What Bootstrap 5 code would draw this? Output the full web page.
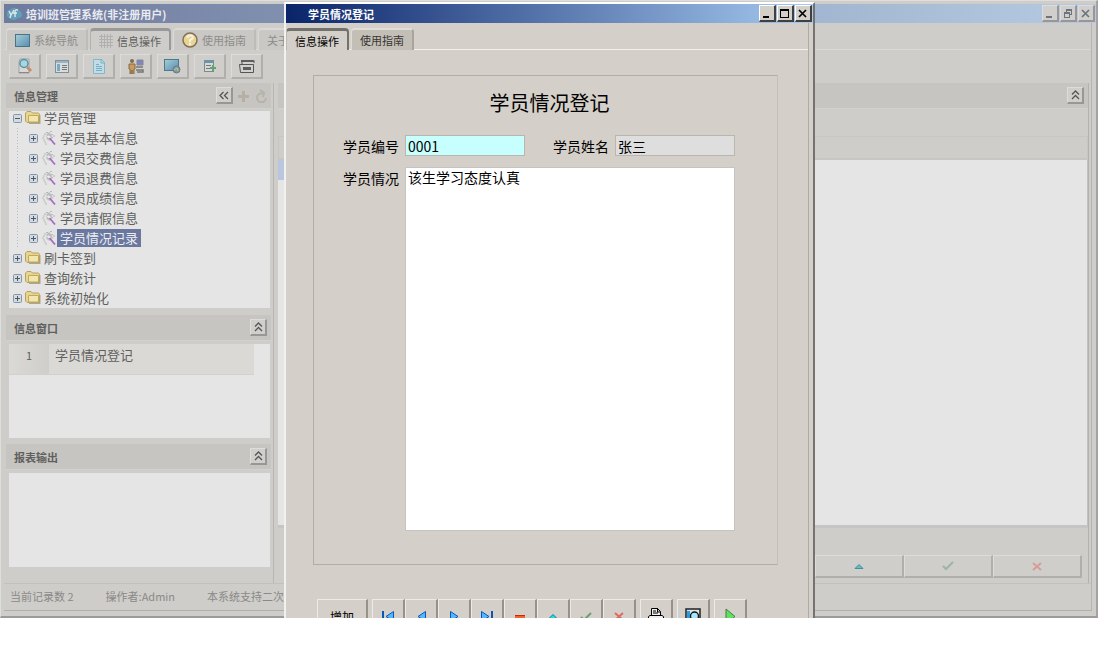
<!DOCTYPE html>
<html lang="zh-CN">
<head>
<meta charset="utf-8">
<meta name="viewport" content="width=device-width, initial-scale=1">
<title>培训班管理系统</title>
<link href="https://cdn.jsdelivr.net/npm/bootstrap@5.3.0/dist/css/bootstrap.min.css" rel="stylesheet">
<style>
body{font-family:"Noto Sans CJK SC","Liberation Sans",sans-serif;font-size:11px;line-height:16px;color:#5f5f5e;background:#fff}
button{font:inherit;color:inherit;padding:0}
svg{display:block;flex:none}
ul{list-style:none;margin:0;padding:0}
.desk{overflow:hidden}
/* main window */
.main-win{background:#cecdc9;border:1px solid #dededc;border-right:2px solid #a2a2a0;border-bottom:2px solid #9b9b9a;padding:3px 0 5px 3px}
.bar{height:19px;padding-right:1px;font-weight:700}
.main-bar{background:linear-gradient(90deg,#6f7b9e,#b5cae2);color:#e9ebf0;padding-left:2px}
.wins{gap:1px}
.frame{border-right:1px solid #b5b4b0;border-bottom:1px solid #b0afab;margin-right:4px}
.tabs{height:27px;padding-top:5px;border-bottom:1px solid #dbdad7;gap:2px}
.main-tabs{padding-left:2px}
.tab-b{height:22px;border:1px solid #dad9d6;border-top-width:2px;border-bottom:0;border-right:2px solid #bdbcb8;border-radius:4px 4px 0 0;background:#c9c8c4;color:#8e8d8b;padding:0 8px;gap:4px;white-space:nowrap}
.tab-b.on{background:#cecdc9;color:#5f5f5e;border-color:#999997;border-left-color:#b2b2b0;border-top-width:3px}
.raised{background:#cfceca;border:1px solid #dddcda;border-right:2px solid #b0afac;border-bottom:2px solid #b0afac}
.tool-b{width:32px;height:25px}
.tools{height:33px;gap:5px;padding-left:5px}
.head{background:#c6c5c1;height:26px;font-weight:700;padding:0 4px 0 8px;border-bottom:1px solid #d2d1cd}
.sq{width:17px;height:17px;background:#d0cfcb;border:1px solid #dedddb;border-right:2px solid #989795;border-bottom:2px solid #989795}
.side{width:270px;border-right:1px solid #b7b6b3;padding:0 2px 16px}
.pane{background:#e5e5e5;margin:3px 1px 0 3px}
.tree-box{height:197px;margin-top:2px;margin-bottom:7px;font-size:13px}
.list-box{height:94px;margin-bottom:6px}
.report-box{height:94px}
.node{height:20px}
.ind{width:16px;height:20px;background:repeating-linear-gradient(#bbb 0 1px,transparent 1px 3px) 8px 0/1px 100% no-repeat}
.lab{padding:0 3px;line-height:18px}
.lab.sel{background:#6a789f;color:#eceef3}
.grid-row{width:245px;height:31px;background:#dad9d5;border-bottom:1px solid #d1d0cc}
.num{width:40px;background:linear-gradient(90deg,#dad9d5,#cfceca);text-align:center;padding-top:3px}
.row-text{font-size:13px;padding:3px 0 0 6px}
.status{height:27px;border-top:1px solid #c2c1bd;color:#8a8988;gap:32px;padding-left:6px;padding-bottom:3px}
.work{border-right:1px solid #b3b2af;margin-left:4px;margin-right:2px}
.cap{height:27px}
.colhead{height:24px;border:1px solid #c7c6c2;border-width:1px 1px 2px}
.data{background:#e5e5e5;min-height:100px;border-right:1px solid #c2c1bd;border-bottom:3px solid #c5c5c4}
.sel-row{height:20px;background:#b9c6dd}
.navs{padding:0 6px 5px 0}
.nav-b{width:89px;height:23px}
.c-ok{color:#9bb5a3}
.c-no{color:#d79c96}
/* dialog window */
.dlg{top:2px;left:284px;right:283px;bottom:0;background:#d4cfc8;color:#000;border:2px solid #fff;border-left-color:#f1f1f0;border-right:2px solid #747371;border-bottom:0}
.dlg-bar{background:linear-gradient(90deg,#0a246a,#a6caf0);color:#fff;padding-left:22px}
.dlg .sq{background:#d4cfc8;border-color:#fff #404040 #404040 #fff}
.dlg-frame{border-right:1px solid #aeaaa4;margin-right:4px}
.dlg .tabs{border-color:#f3f1ee}
.dlg .tab-b{background:#c4bfb6;color:#373634;border-color:#e0ddd7 #a9a59e #e0ddd7 #e0ddd7;padding:0 8px}
.dlg .tab-b.on{background:#d4cfc8;color:#000;border-color:#73716e #73716e #73716e #bdb9b3}
.dlg .c-ok{color:#6c9d77}
.dlg .c-no{color:#dc6a5d}
.group{margin:25px 30px 34px 27px;height:490px;border:1px solid #b1ada7;border-right-color:#c4c0ba;padding:15px 21px 0 29px}
.group h1{font-size:20px;line-height:24px;font-weight:400;margin:0 0 20px;text-align:center}
.fields{display:grid;grid-template-columns:62px 1fr 28px 62px 1fr;row-gap:9px;font-size:14px;padding-right:21px}
.fields label{line-height:23px}
.fld{border:1px solid #b9b6b0;border-radius:0;width:100%;height:21px;padding:0 2px;line-height:19px;color:#000;font-size:14px;outline:0;min-width:0}
.fld.key{background:#c7ffff}
.fld.ro{background:#dededf}
textarea.fld{height:364px;resize:none;grid-column:2/6;background:#fff;border-color:#c7c4bf;display:block}
.cmds{padding-left:31px;height:37px;gap:4px;font-size:12px}
.cmd{width:33px;height:36px;background:#d4cfc8;border:1px solid #edebe7;border-right:2px solid #969289;border-bottom:2px solid #969289}
.cmd.wide{width:51px}
</style>
</head>
<body>
<svg width="0" height="0" class="position-absolute" aria-hidden="true">
<defs>
<symbol id="up2" viewBox="0 0 9 10"><path d="M1 4.500 4.500 1 8 4.500M1 9 4.500 5.500 8 9" fill="none" stroke="#555" stroke-width="1.300"/></symbol>
<symbol id="left2" viewBox="0 0 10 9"><path d="M4.500 1 1 4.500 4.500 8M9 1 5.500 4.500 9 8" fill="none" stroke="#555" stroke-width="1.300"/></symbol>
<symbol id="folder" viewBox="0 0 16 14"><path d="M4 4h11.500v9H4z" fill="#a8a59b"/><path d="M.5 2 2 .5h4L7.500 2h6l1 1.500v8H2L.5 10z" fill="#e6d68f" stroke="#b8a15e"/><path d="M3.500 4.500h10v6.500h-10z" fill="#efe7ae" stroke="#c3a85c"/></symbol>
<symbol id="plus" viewBox="0 0 9 9"><rect x=".5" y=".5" width="8" height="8" rx="1" fill="#d4dae0" stroke="#8496a9"/><path d="M2 4.500h5M4.500 2v5" stroke="#4b5867"/></symbol>
<symbol id="minus" viewBox="0 0 9 9"><rect x=".5" y=".5" width="8" height="8" rx="1" fill="#d4dae0" stroke="#8496a9"/><path d="M2 4.500h5" stroke="#4b5867"/></symbol>
<symbol id="wand" viewBox="0 0 15 15"><path d="M5 3 8 1 9 3 12 3 10 5 12 7 9 8 8 10 5 8 5 5z" fill="#bcbdbd"/><path d="M3 3h1M2 5h1M1 7h1M2 9h1M3 11h1M4 13h1M9 .5h1M5 1.500h1M12 5h1" stroke="#8d8d8d"/><path d="M6 5l3 2" stroke="#eee" stroke-width="2"/><path d="m8 7 5.500 6.500" stroke="#a66bc4" stroke-width="1.800"/></symbol>
<symbol id="min" viewBox="0 0 12 12"><path d="M3 9h6v2H3z" fill="currentColor"/></symbol>
<symbol id="max" viewBox="0 0 12 12"><path d="M2 2h9v9H2zM3 4v6h7V4z" fill="currentColor" fill-rule="evenodd"/></symbol>
<symbol id="restore" viewBox="0 0 12 12"><path d="M5 2h6v6H9V7h1V4H6v1H5zM3 5h6v6H3zM4 7v3h4V7z" fill="currentColor" fill-rule="evenodd"/></symbol>
<symbol id="close" viewBox="0 0 12 12"><path d="m3 3 7 7M10 3l-7 7" stroke="currentColor" stroke-width="1.700"/></symbol>
<symbol id="tri" viewBox="0 0 10 5"><path d="M5 .5 9 4.500H1z" fill="#64bdc9" stroke="#448f9a"/></symbol>
<symbol id="tick" viewBox="0 0 12 10"><path d="m1 5 3 3 7-7" fill="none" stroke="currentColor" stroke-width="2"/></symbol>
<symbol id="cross" viewBox="0 0 10 9"><path d="m1 1 8 7M9 1 1 8" stroke="currentColor" stroke-width="1.900"/></symbol>
<linearGradient id="scr" x2="1" y2="1"><stop stop-color="#a8ced8"/><stop offset="1" stop-color="#568eae"/></linearGradient>
</defs>
</svg>

<div class="desk position-relative">
<div class="main-win">
  <header class="bar main-bar d-flex align-items-center">
    <svg width="16" height="15" viewBox="0 0 16 15" class="me-1"><path d="M3 12Q0 11 1 7q0-3 4-4 4-3 7 1 4 1 4 5 0 3-4 3-4 4-9 0z" fill="#5f9fb7"/><path d="m3 5 2 4 3-5M5 9l-1 3M12 4q-3-1-3 2v5M7 7h4" fill="none" stroke="#e0e8ea" stroke-width="1.400"/></svg>
    <span>培训班管理系统(非注册用户)</span>
    <div class="wins d-flex ms-auto text-secondary">
      <button class="sq" aria-label="最小化"><svg width="12" height="12"><use href="#min"/></svg></button>
      <button class="sq" aria-label="还原"><svg width="12" height="12"><use href="#restore"/></svg></button>
      <button class="sq" aria-label="关闭"><svg width="12" height="12"><use href="#close"/></svg></button>
    </div>
  </header>
  <div class="frame">
    <nav class="tabs main-tabs d-flex">
      <button class="tab-b d-flex align-items-center"><svg width="15" height="13"><rect x=".5" y=".5" width="14" height="12" fill="url(#scr)" stroke="#477488"/></svg>系统导航</button>
      <button class="tab-b on d-flex align-items-center"><svg width="14" height="14"><path d="M2.500 0v14M5.500 0v14M8.500 0v14M11.500 0v14M0 2.500h14M0 5.500h14M0 8.500h14M0 11.500h14" stroke="#b0b0af"/></svg>信息操作</button>
      <button class="tab-b d-flex align-items-center"><svg width="16" height="16"><circle cx="8" cy="8" r="7" fill="#e8d590" stroke="#836f5a" stroke-width="1.500"/><path d="M5.500 6q0-3 3-2.500 3 .5 2 3L8 8v2" fill="none" stroke="#f5f1e4" stroke-width="2"/><circle cx="8" cy="12" r="1.200" fill="#f5f1e4"/></svg>使用指南</button>
      <button class="tab-b">关于</button>
    </nav>
    <div class="tools d-flex align-items-center">
      <button class="tool-b raised d-grid justify-content-center align-content-center" aria-label="查找"><svg width="16" height="16"><path d="M3 1h9v14H2V4z" fill="#d8d8d6" stroke="#a2a2a0"/><path d="M2 14.500h10" stroke="#888"/><circle cx="7" cy="5.500" r="4" fill="#abd5dd" stroke="#5394ae" stroke-width="1.500"/><path d="m10 9 4 4" stroke="#c88b71" stroke-width="3"/></svg></button>
      <button class="tool-b raised d-grid justify-content-center align-content-center" aria-label="列表"><svg width="14" height="13"><rect x=".5" y=".5" width="13" height="12" fill="#d9dcdd" stroke="#7e909c"/><path d="M1 1h12v2H1z" fill="#9fb3bf"/><path d="M2 4h3v7H2z" fill="#7baac3"/><path d="M7 5.500h5M7 7.500h5M7 9.500h5" stroke="#777"/></svg></button>
      <button class="tool-b raised d-grid justify-content-center align-content-center" aria-label="新建"><svg width="14" height="15"><path d="M1.500.5h8l3 3v11h-11z" fill="#c1dce4" stroke="#82b8cc"/><path d="M9 0v4h4M4 5.500h3M4 7.500h6M4 9.500h6M4 11.500h6" fill="none" stroke="#75aec6"/></svg></button>
      <button class="tool-b raised d-grid justify-content-center align-content-center" aria-label="用户"><svg width="16" height="16"><circle cx="4" cy="3" r="2" fill="#85694f"/><path d="M1 6h6v5H6v5H4v-4l-1 4H2v-5H1z" fill="#c59c5c" stroke="#876a48"/><path d="M9 2h6v5H9z" fill="#7f83c7" stroke="#888"/><path d="M8 9h7M8 12h7v2H9" fill="none" stroke="#77777a" stroke-width="1.500"/></svg></button>
      <button class="tool-b raised d-grid justify-content-center align-content-center" aria-label="网络"><svg width="17" height="16"><rect x=".5" y="1.500" width="14" height="11" fill="url(#scr)" stroke="#4b788b"/><circle cx="12.500" cy="11.500" r="3.500" fill="#76a28d" stroke="#7271a6"/><path d="m10 12 3-2 1 3" fill="none" stroke="#d1c48e"/></svg></button>
      <button class="tool-b raised d-grid justify-content-center align-content-center" aria-label="导出"><svg width="14" height="14"><rect x="1.500" y="1.500" width="9" height="11" fill="#d5dad9" stroke="#81888a"/><path d="M1 1h10v3H1z" fill="#6c94a5"/><path d="M3 6.500h5M3 9.500h4" stroke="#777"/><path d="M7 9h6M10 6v6" stroke="#60a176" stroke-width="2"/></svg></button>
      <button class="tool-b raised d-grid justify-content-center align-content-center" aria-label="打印"><svg width="17" height="15"><path d="M4 5V1.500h12V4M1.500 5.500h14v8h-13z" fill="#d1d1cf" stroke="#555"/><path d="M3 1h13v2H3zM5 8h8v3H5z" fill="#5e5e5e"/></svg></button>
    </div>
    <div class="d-flex">
      <aside class="side">
        <div class="head d-flex align-items-center">信息管理
          <button class="sq ms-auto d-grid justify-content-center align-content-center me-1" aria-label="收起"><svg width="10" height="9"><use href="#left2"/></svg></button>
          <svg width="30" height="14"><path d="M1 7.500h11M6.500 2v11" stroke="#b5b0a3" stroke-width="3"/><path d="M27 5a4.500 4.500 0 1 0 2 4M23 1l4 3-1 4" fill="none" stroke="#b7b3a8" stroke-width="2"/></svg>
        </div>
        <div class="pane tree-box d-flex align-items-end overflow-hidden">
          <ul>
            <li class="node d-flex align-items-center"><svg width="16" height="9"><use href="#minus" x="4" width="9" height="9"/></svg><svg width="16" height="14"><use href="#folder"/></svg><span class="lab">学员管理</span></li>
            <li class="node d-flex align-items-center"><i class="ind"></i><svg width="16" height="9"><use href="#plus" x="4" width="9" height="9"/></svg><svg width="16" height="15"><use href="#wand"/></svg><span class="lab">学员基本信息</span></li>
            <li class="node d-flex align-items-center"><i class="ind"></i><svg width="16" height="9"><use href="#plus" x="4" width="9" height="9"/></svg><svg width="16" height="15"><use href="#wand"/></svg><span class="lab">学员交费信息</span></li>
            <li class="node d-flex align-items-center"><i class="ind"></i><svg width="16" height="9"><use href="#plus" x="4" width="9" height="9"/></svg><svg width="16" height="15"><use href="#wand"/></svg><span class="lab">学员退费信息</span></li>
            <li class="node d-flex align-items-center"><i class="ind"></i><svg width="16" height="9"><use href="#plus" x="4" width="9" height="9"/></svg><svg width="16" height="15"><use href="#wand"/></svg><span class="lab">学员成绩信息</span></li>
            <li class="node d-flex align-items-center"><i class="ind"></i><svg width="16" height="9"><use href="#plus" x="4" width="9" height="9"/></svg><svg width="16" height="15"><use href="#wand"/></svg><span class="lab">学员请假信息</span></li>
            <li class="node d-flex align-items-center"><i class="ind"></i><svg width="16" height="9"><use href="#plus" x="4" width="9" height="9"/></svg><svg width="16" height="15"><use href="#wand"/></svg><span class="lab sel">学员情况记录</span></li>
            <li class="node d-flex align-items-center"><svg width="16" height="9"><use href="#plus" x="4" width="9" height="9"/></svg><svg width="16" height="14"><use href="#folder"/></svg><span class="lab">刷卡签到</span></li>
            <li class="node d-flex align-items-center"><svg width="16" height="9"><use href="#plus" x="4" width="9" height="9"/></svg><svg width="16" height="14"><use href="#folder"/></svg><span class="lab">查询统计</span></li>
            <li class="node d-flex align-items-center"><svg width="16" height="9"><use href="#plus" x="4" width="9" height="9"/></svg><svg width="16" height="14"><use href="#folder"/></svg><span class="lab">系统初始化</span></li>
          </ul>
        </div>
        <div class="head d-flex align-items-center">信息窗口<button class="sq ms-auto d-grid justify-content-center align-content-center" aria-label="收起信息窗口"><svg width="9" height="10"><use href="#up2"/></svg></button></div>
        <div class="pane list-box"><div class="grid-row d-flex"><span class="num">1</span><span class="row-text">学员情况登记</span></div></div>
        <div class="head d-flex align-items-center">报表输出<button class="sq ms-auto d-grid justify-content-center align-content-center" aria-label="收起报表输出"><svg width="9" height="10"><use href="#up2"/></svg></button></div>
        <div class="pane report-box"></div>
      </aside>
      <main class="work flex-grow-1 d-flex flex-column">
        <div class="head d-flex align-items-center"><button class="sq ms-auto d-grid justify-content-center align-content-center" aria-label="收起"><svg width="9" height="10"><use href="#up2"/></svg></button></div>
        <div class="cap"></div>
        <div class="colhead"></div>
        <div class="data flex-grow-1"><div class="sel-row w-25"></div></div>
        <div class="cap"></div>
        <div class="navs d-flex justify-content-end">
          <button class="nav-b raised d-grid justify-content-center align-content-center" aria-label="编辑"><svg width="10" height="5"><use href="#tri"/></svg></button>
          <button class="nav-b raised c-ok d-grid justify-content-center align-content-center" aria-label="保存"><svg width="12" height="10"><use href="#tick"/></svg></button>
          <button class="nav-b raised c-no d-grid justify-content-center align-content-center" aria-label="取消"><svg width="10" height="9"><use href="#cross"/></svg></button>
        </div>
      </main>
    </div>
    <footer class="status d-flex align-items-center"><span>当前记录数 2</span><span>操作者:Admin</span><span>本系统支持二次开发</span></footer>
  </div>
</div>

<section class="dlg position-absolute overflow-hidden" role="dialog" aria-label="学员情况登记">
  <header class="bar dlg-bar d-flex align-items-center"><span>学员情况登记</span>
    <div class="wins d-flex ms-auto text-black">
      <button class="sq" aria-label="最小化"><svg width="12" height="12"><use href="#min"/></svg></button>
      <button class="sq" aria-label="最大化"><svg width="12" height="12"><use href="#max"/></svg></button>
      <button class="sq" aria-label="关闭"><svg width="12" height="12"><use href="#close"/></svg></button>
    </div>
  </header>
  <div class="dlg-frame">
    <nav class="tabs d-flex"><button class="tab-b on">信息操作</button><button class="tab-b">使用指南</button></nav>
    <form class="group">
      <h1>学员情况登记</h1>
      <div class="fields">
        <label for="no">学员编号</label><input id="no" class="fld key" value="0001">
        <span></span>
        <label for="nm">学员姓名</label><input id="nm" class="fld ro" value="张三" readonly>
        <label for="st">学员情况</label><textarea id="st" class="fld">该生学习态度认真</textarea>
      </div>
    </form>
    <div class="cmds d-flex">
      <button class="cmd wide">增加</button>
      <div class="d-flex">
        <button class="cmd d-grid justify-content-center align-content-center" aria-label="首条"><svg width="12" height="11"><path d="M1 0v11" stroke="#0857b9" stroke-width="2"/><path d="M11.500.5v10L4 5.500z" fill="#56b5ff" stroke="#0857b9"/></svg></button>
        <button class="cmd d-grid justify-content-center align-content-center" aria-label="上一条"><svg width="9" height="11"><path d="M8.500.5v10L1 5.500z" fill="#56b5ff" stroke="#0857b9"/></svg></button>
        <button class="cmd d-grid justify-content-center align-content-center" aria-label="下一条"><svg width="9" height="11"><path d="M.5.5v10L8 5.500z" fill="#56b5ff" stroke="#0857b9"/></svg></button>
        <button class="cmd d-grid justify-content-center align-content-center" aria-label="末条"><svg width="12" height="11"><path d="M11 0v11" stroke="#0857b9" stroke-width="2"/><path d="M.5.5v10L8 5.500z" fill="#56b5ff" stroke="#0857b9"/></svg></button>
        <button class="cmd d-grid justify-content-center align-content-center" aria-label="删除"><svg width="10" height="3"><path d="M0 0h10v3H0z" fill="#f0652e"/><path d="M0 0h10v1H0z" fill="#c92b00"/></svg></button>
        <button class="cmd d-grid justify-content-center align-content-center" aria-label="编辑"><svg width="10" height="5"><path d="M5 .5 9 4.500H1z" fill="#2fd6e6" stroke="#078191"/></svg></button>
        <button class="cmd c-ok d-grid justify-content-center align-content-center" aria-label="保存"><svg width="12" height="10"><use href="#tick"/></svg></button>
        <button class="cmd c-no d-grid justify-content-center align-content-center" aria-label="取消"><svg width="10" height="9"><use href="#cross"/></svg></button>
      </div>
      <button class="cmd d-grid justify-content-center align-content-center" aria-label="打印"><svg width="16" height="17"><path d="M3.500 7V.5h6l3 3V7M9.500 0v4h3M5 3h3M5 5h5M.5 14V8.500L2 7.500h12l1.500 1V14z" fill="#eee" stroke="#000"/></svg></button>
      <button class="cmd d-grid justify-content-center align-content-center" aria-label="预览"><svg width="16" height="17"><path d="M1 1h14v14H1z" fill="#dce4e8" stroke="#222" stroke-width="1.500"/><path d="M2 3h3v11H2z" fill="#2b9de2"/><circle cx="9.500" cy="8" r="4" fill="#a7e4ff" stroke="#111" stroke-width="1.300"/></svg></button>
      <button class="cmd d-grid justify-content-center align-content-center" aria-label="执行"><svg width="11" height="17"><path d="M1 1v15l9-7.500z" fill="#5ce35c" stroke="#49794b"/></svg></button>
    </div>
  </div>
</section>
</div>
<script src="https://cdn.jsdelivr.net/npm/bootstrap@5.3.0/dist/js/bootstrap.bundle.min.js"></script>
</body>
</html>
